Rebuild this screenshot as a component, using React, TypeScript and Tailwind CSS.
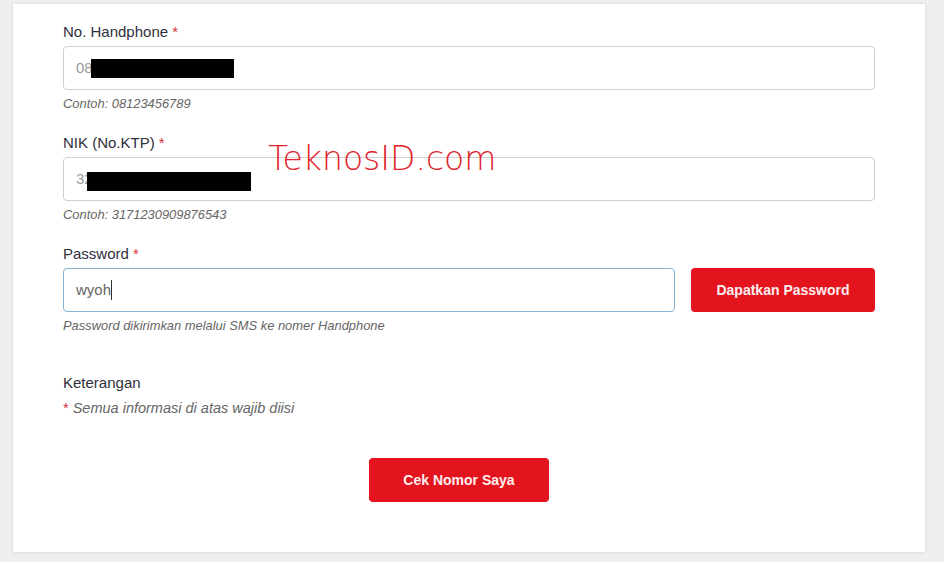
import React from "react";

const font = { fontFamily: '"Liberation Sans", Arial, sans-serif' };

function Label({ text }: { text: string }) {
  return (
    <div className="text-[15px] leading-[21px] text-[#2e2f3c] mb-[4px]">
      {text} <span className="text-[#d2343e]">*</span>
    </div>
  );
}

function Helper({ text }: { text: string }) {
  return <div className="text-[12.9px] leading-[18px] italic text-[#666] mt-[5px]">{text}</div>;
}

function Field({
  value,
  redact,
  focused,
  caret,
}: {
  value: string;
  redact?: { left: number; top: number; w: number; h: number };
  focused?: boolean;
  caret?: boolean;
}) {
  return (
    <div
      className={`relative flex-1 h-[44px] rounded-[4px] border bg-white flex items-center px-[12px] text-[15px] ${
        focused ? "border-[#80b3d1] text-[#666]" : "border-[#cfcfcf] text-[#9a9a9a]"
      }`}
    >
      <span>{value}</span>
      {caret && <span className="w-px h-[20px] bg-[#333]" />}
      {redact && (
        <div
          className="absolute bg-black"
          style={{ left: redact.left, top: redact.top, width: redact.w, height: redact.h }}
        />
      )}
    </div>
  );
}

export default function App() {
  return (
    <div className="min-h-[562px] bg-[#efefef] pt-[4px] pb-[11px]" style={font}>
      <div className="relative ml-[13px] w-[912px] bg-white shadow-[0_0_3px_rgba(0,0,0,0.12)] px-[50px] pt-[17px] pb-[50px]">
        <div className="mb-[19px]">
          <Label text="No. Handphone" />
          <div className="flex">
            <Field value="08" redact={{ left: 27, top: 12, w: 143, h: 19 }} />
          </div>
          <Helper text="Contoh: 08123456789" />
        </div>

        <div className="mb-[19px]">
          <Label text="NIK (No.KTP)" />
          <div className="flex">
            <Field value="32" redact={{ left: 23, top: 14, w: 164, h: 19 }} />
          </div>
          <Helper text="Contoh: 3171230909876543" />
        </div>

        <div>
          <Label text="Password" />
          <div className="flex gap-[16px]">
            <Field value="wyoh" focused caret />
            <button className="w-[184px] h-[44px] rounded-[4px] bg-[#e4141e] text-[#fdeeee] text-[14px] font-bold">
              Dapatkan Password
            </button>
          </div>
          <Helper text="Password dikirimkan melalui SMS ke nomer Handphone" />
        </div>

        <div className="mt-[37px] text-[15px] leading-[21px] text-[#2e2f3c]">Keterangan</div>
        <div className="mt-[5px] text-[14.5px] leading-[20px] italic text-[#666]">
          <span className="not-italic text-[#d2343e]">*</span> Semua informasi di atas wajib diisi
        </div>

        <div className="mt-[40px]">
          <button className="ml-[306px] w-[180px] h-[44px] rounded-[4px] bg-[#e4141e] text-[#fdeeee] text-[14px] font-bold">
            Cek Nomor Saya
          </button>
        </div>

        <div
          className="absolute left-[255px] top-[135px] text-[33px] leading-[40px] text-[#e0222a] font-light"
          style={{ fontFamily: '"DejaVu Sans", sans-serif' }}
        >
          TeknosID.com
        </div>
      </div>
    </div>
  );
}
